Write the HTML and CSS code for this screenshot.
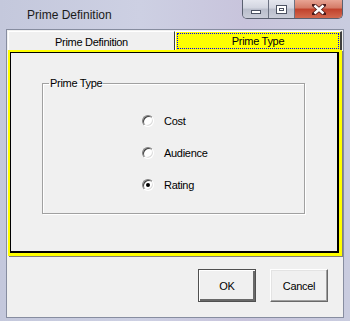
FILE: index.html
```html
<!DOCTYPE html>
<html lang="en">
<head>
    <meta charset="UTF-8">
    <title>Prime Definition</title>
    <link rel="stylesheet" href="styles.css">
</head>
<body>
    <div class="window">
        <div class="titlebar">
            <span class="title">Prime Definition</span>
            <div class="controls">
                <div class="ctl ctl-min"><span class="min-glyph"></span></div>
                <div class="ctl ctl-max"><span class="max-glyph"></span></div>
                <div class="ctl ctl-close">
                    <svg width="14" height="11" viewBox="0 0 14 11">
                        <path d="M2 1 L12 10 M12 1 L2 10" stroke="#4a1a1a" stroke-width="4" stroke-linecap="square"/>
                        <path d="M2.5 1.5 L11.5 9.5 M11.5 1.5 L2.5 9.5" stroke="#ffffff" stroke-width="2.4"/>
                    </svg>
                </div>
            </div>
        </div>

        <div class="client">
            <div class="tabs">
                <div class="tab">Prime Definition</div>
                <div class="tab active"><span class="focus">Prime Type</span></div>
            </div>

            <div class="panel">
                <div class="panel-inner">
                    <fieldset class="group">
                        <legend>Prime Type</legend>
                        <div class="options">
                            <div class="option"><span class="radio"></span>Cost</div>
                            <div class="option"><span class="radio"></span>Audience</div>
                            <div class="option"><span class="radio checked"></span>Rating</div>
                        </div>
                    </fieldset>
                </div>
            </div>

            <div class="actions">
                <button class="btn default">OK</button>
                <button class="btn">Cancel</button>
            </div>
        </div>
    </div>
</body>
</html>
```

FILE: styles.css
```css
* {
    margin: 0;
    padding: 0;
    box-sizing: border-box;
}

body {
    width: 350px;
    height: 321px;
    overflow: hidden;
    font-family: 'Liberation Sans', Arial, sans-serif;
    font-size: 11px;
    letter-spacing: -0.3px;
    color: #000;
}

.window {
    width: 350px;
    height: 321px;
    display: flex;
    flex-direction: column;
    background: linear-gradient(90deg, #c4c8dc 0%, #cdd0e3 40%, #c8c4dc 70%, #c9ccdf 100%);
}

/* title bar */
.titlebar {
    height: 29px;
    display: flex;
    align-items: flex-start;
    padding-left: 27px;
}

.title {
    font-family: 'Liberation Sans', Arial, sans-serif;
    font-size: 12px;
    letter-spacing: 0;
    color: #1a1a1a;
    margin-top: 8px;
}

.controls {
    margin-left: auto;
    margin-right: 7px;
    display: flex;
    height: 19px;
    border: 1px solid #5a6070;
    border-top: none;
    border-radius: 0 0 5px 5px;
    overflow: hidden;
}

.ctl {
    height: 18px;
    display: flex;
    align-items: center;
    justify-content: center;
}

.ctl-min,
.ctl-max {
    width: 26px;
    background: linear-gradient(#e4e6ee 0%, #d2d5e0 45%, #b9bdcb 50%, #c9ccd8 100%);
    border-right: 1px solid #6c7282;
}

.ctl-close {
    width: 47px;
    background: linear-gradient(#e8a493 0%, #d47a66 45%, #c0412b 50%, #d3694f 100%);
}

.min-glyph {
    width: 10px;
    height: 4px;
    margin-top: 5px;
    background: #fff;
    border: 1px solid #4c5262;
}

.max-glyph {
    width: 11px;
    height: 9px;
    border: 1px solid #4c5262;
    background: #fff;
    box-shadow: inset 0 0 0 2px #fff, inset 0 0 0 3px #4c5262;
}

/* client area */
.client {
    flex: 1;
    margin: 0 6px 3px 6px;
    border: 1px solid #878da0;
    background: #f0f0f0;
    padding: 1px 0 0 1px;
    display: flex;
    flex-direction: column;
}

.tabs {
    display: flex;
    height: 19px;
}

.tab {
    width: 167px;
    display: flex;
    align-items: center;
    justify-content: center;
    border-top: 1px solid #fff;
    border-left: 1px solid #fff;
    border-right: 1px solid #404040;
    padding-top: 1px;
}

.tab.active {
    background: #ffff00;
    border-right: 2px solid #404040;
    padding: 1px;
}

.focus {
    flex: 1;
    align-self: stretch;
    display: flex;
    align-items: center;
    justify-content: center;
    border: 1px dotted #0000ff;
}

.panel {
    height: 206px;
    width: 334px;
    border: 3px solid #ffff00;
    border-left-width: 2px;
    border-top-width: 2px;
    box-shadow: 1px 1px 0 #808080;
}

.panel-inner {
    height: 100%;
    border: 1px solid #000;
    border-right-width: 2px;
    border-bottom-width: 2px;
    padding: 24px 0 0 31px;
}

.group {
    width: 263px;
    height: 137px;
    border: 1px solid #a0a0a0;
    box-shadow: 1px 1px 0 #fff, inset 1px 1px 0 #fff;
    padding: 0;
}

.group legend {
    margin-left: 6px;
    padding: 0 1px;
}

.options {
    display: flex;
    flex-direction: column;
    gap: 19px;
    padding: 25px 0 0 99px;
}

.option {
    display: flex;
    align-items: center;
    gap: 10px;
    height: 13px;
}

.radio {
    width: 12px;
    height: 12px;
    border-radius: 50%;
    border: 1px solid;
    border-color: #808080 #fff #fff #808080;
    background: #fff;
    box-shadow: inset 1px 1px 0 #404040, inset -1px -1px 0 #dcdcdc;
    display: flex;
    align-items: center;
    justify-content: center;
}

.radio.checked::after {
    content: "";
    width: 4px;
    height: 4px;
    border-radius: 50%;
    background: #000;
}

/* buttons */
.actions {
    display: flex;
    justify-content: flex-end;
    gap: 14px;
    padding: 13px 15px 0 0;
}

.btn {
    width: 58px;
    height: 33px;
    font-family: inherit;
    font-size: 11px;
    letter-spacing: -0.3px;
    background: #f0f0f0;
    border: 1px solid;
    border-color: #fff #696969 #696969 #fff;
    box-shadow: inset -1px -1px 0 #a0a0a0, inset 1px 1px 0 #e3e3e3;
    color: #000;
}

.btn.default {
    border: 1px solid #505050;
    box-shadow: inset 1px 1px 0 #fff, inset -2px -2px 0 #696969;
}
```
